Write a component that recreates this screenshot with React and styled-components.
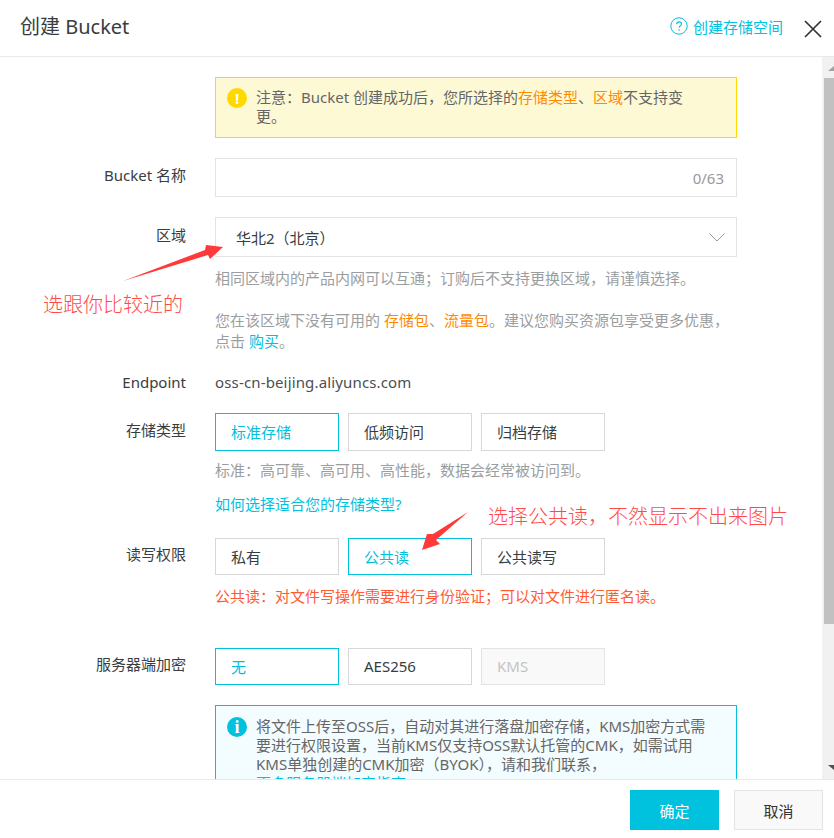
import React from 'react';
import styled, { createGlobalStyle } from 'styled-components';

const GlobalStyle = createGlobalStyle`
  html, body {
    margin: 0;
    padding: 0;
    background: #fff;
  }
  body {
    font-family: "Noto Sans", "Noto Sans CJK SC", sans-serif;
    font-size: 15px;
    color: #333;
    overflow: hidden;
  }
  * {
    box-sizing: border-box;
  }
`;

const App = () => {
  return (
    <Dialog>
      <GlobalStyle />
      <Header>
        <Title>创建 Bucket</Title>
        <HelpLink href="#">
          <svg width="18" height="18" viewBox="0 0 18 18" fill="none">
            <circle cx="9" cy="9" r="8.2" stroke="#00c1de" strokeWidth="1" />
            <path d="M6.6 7.1c.1-1.4 1.1-2.2 2.5-2.2 1.4 0 2.4.8 2.4 2 0 1.9-2.4 1.9-2.4 3.8" stroke="#00c1de" strokeWidth="1.1" />
            <circle cx="9.1" cy="13" r=".8" fill="#00c1de" />
          </svg>
          创建存储空间
        </HelpLink>
        <CloseButton>
          <svg width="18" height="18" viewBox="0 0 18 18">
            <path d="M1 1l16 16M17 1L1 17" stroke="#333" strokeWidth="1.7" />
          </svg>
        </CloseButton>
      </Header>

      <Body>
        <Form>
          <Row>
            <Label />
            <Control>
              <Notice>
                <RoundIcon $color="#ffd800">!</RoundIcon>
                <NoticeText>
                  注意：Bucket 创建成功后，您所选择的<Orange>存储类型</Orange>、<Orange>区域</Orange>不支持变更。
                </NoticeText>
              </Notice>
            </Control>
          </Row>

          <Row>
            <Label $top={7}>Bucket 名称</Label>
            <Control>
              <Field $height={39}>
                <span />
                <Counter>0/63</Counter>
              </Field>
            </Control>
          </Row>

          <Row $gap={12}>
            <Label $top={8}>区域</Label>
            <Control>
              <Field $height={40} $select>
                <SelectValue>华北2（北京）</SelectValue>
                <svg width="16" height="9" viewBox="0 0 16 9" fill="none">
                  <path d="M.5.5L8 8l7.5-7.5" stroke="#999" strokeWidth="1" />
                </svg>
              </Field>
              <Help $top={11}>相同区域内的产品内网可以互通；订购后不支持更换区域，请谨慎选择。</Help>
              <Help $top={21}>
                您在该区域下没有可用的 <Orange>存储包</Orange>、<Orange>流量包</Orange>。建议您购买资源包享受更多优惠，点击 <Link href="#">购买</Link>。
              </Help>
            </Control>
          </Row>

          <Row>
            <Label $top={8}>Endpoint</Label>
            <Control>
              <Plain>oss-cn-beijing.aliyuncs.com</Plain>
            </Control>
          </Row>

          <Row $gap={23}>
            <Label $top={7}>存储类型</Label>
            <Control>
              <Options $height={38}>
                <Option $active>标准存储</Option>
                <Option>低频访问</Option>
                <Option>归档存储</Option>
              </Options>
              <Help $top={9}>标准：高可靠、高可用、高性能，数据会经常被访问到。</Help>
              <Help $top={13}>
                <Link href="#">如何选择适合您的存储类型?</Link>
              </Help>
            </Control>
          </Row>

          <Row $gap={41}>
            <Label>读写权限</Label>
            <Control>
              <Options>
                <Option>私有</Option>
                <Option $active>公共读</Option>
                <Option>公共读写</Option>
              </Options>
              <Warning>公共读：对文件写操作需要进行身份验证；可以对文件进行匿名读。</Warning>
            </Control>
          </Row>

          <Row>
            <Label>服务器端加密</Label>
            <Control>
              <Options>
                <Option $active>无</Option>
                <Option>AES256</Option>
                <Option $disabled>KMS</Option>
              </Options>
            </Control>
          </Row>

          <Row>
            <Label />
            <Control>
              <InfoBox>
                <RoundIcon $color="#00c1de" $serif>i</RoundIcon>
                <InfoText>
                  将文件上传至OSS后，自动对其进行落盘加密存储，KMS加密方式需要进行权限设置，当前KMS仅支持OSS默认托管的CMK，如需试用KMS单独创建的CMK加密（BYOK），请和我们联系，
                  <br />
                  <Link href="#">更多服务器端加密指南</Link>
                </InfoText>
              </InfoBox>
            </Control>
          </Row>
        </Form>

        <Scrollbar>
          <ArrowUp />
          <Thumb />
          <ArrowDown />
        </Scrollbar>
      </Body>

      <Footer>
        <PrimaryButton>确定</PrimaryButton>
        <SecondaryButton>取消</SecondaryButton>
      </Footer>

      <Annotations width="834" height="838" viewBox="0 0 834 838">
        <polygon points="123,281 205,250 206,245 223,247 210,259 208,255" fill="#ff3a3a" />
        <polygon points="468,512 433,534 427,534 422,550 440,544 436,540" fill="#ff3a3a" />
      </Annotations>
      <Note $left={43} $top={291}>选跟你比较近的</Note>
      <Note $left={488} $top={503}>选择公共读，不然显示不出来图片</Note>
    </Dialog>
  );
};

const Dialog = styled.div`
  position: relative;
  display: flex;
  flex-direction: column;
  width: 834px;
  height: 838px;
  background: #fff;
  overflow: hidden;
`;
const Header = styled.div`
  display: flex;
  align-items: center;
  height: 57px;
  padding: 0 12px 4px 20px;
  border-bottom: 1px solid #e9e9e9;
`;
const Title = styled.div`
  flex: 1;
  margin-bottom: 2px;
  font-size: 20px;
  color: #373d41;
`;
const HelpLink = styled.a`
  display: flex;
  align-items: center;
  gap: 5px;
  color: #00c1de;
  text-decoration: none;
`;
const CloseButton = styled.span`
  display: flex;
  margin: 5px 0 0 21px;
`;
const Body = styled.div`
  position: relative;
  flex: 1;
  min-height: 0;
  overflow: hidden;
`;
const Form = styled.div`
  display: flex;
  flex-direction: column;
  padding: 20px 97px 0 0;
`;
const Row = styled.div`
  display: flex;
  margin-bottom: ${(props) => props.$gap || 20}px;
`;
const Label = styled.div`
  flex: 0 0 186px;
  padding-top: ${(props) => props.$top || 6}px;
  text-align: right;
  line-height: 21px;
  color: #373d41;
`;
const Control = styled.div`
  flex: 1;
  margin-left: 29px;
  min-width: 0;
`;
const Notice = styled.div`
  display: flex;
  gap: 9px;
  height: 61px;
  padding: 10px 42px 0 11px;
  background: #fef9d5;
  border: 1px solid #ffd800;
`;
const RoundIcon = styled.span`
  flex: 0 0 20px;
  width: 20px;
  height: 20px;
  border-radius: 50%;
  background: ${(props) => props.$color};
  color: #fff;
  font-family: ${(props) => (props.$serif ? '"Liberation Serif", serif' : 'inherit')};
  font-size: ${(props) => (props.$serif ? '18px' : '15px')};
  font-weight: 700;
  line-height: 20px;
  text-align: center;
`;
const NoticeText = styled.div`
  line-height: 19px;
  color: #666;
`;
const Orange = styled.span`
  color: #ff8a00;
`;
const Field = styled.div`
  display: flex;
  align-items: center;
  justify-content: space-between;
  height: ${(props) => props.$height}px;
  padding: 0 ${(props) => (props.$select ? '11px' : '12px')} 0 20px;
  border: 1px solid #e3e3e3;
`;
const Counter = styled.span`
  color: #999;
`;
const SelectValue = styled.span`
  color: #373d41;
`;
const Help = styled.div`
  margin-top: ${(props) => props.$top}px;
  line-height: 21px;
  color: #9b9ea0;
`;
const Link = styled.a`
  color: #00c1de;
  text-decoration: none;
`;
const Plain = styled.div`
  padding-top: 8px;
  line-height: 21px;
  letter-spacing: 0.15px;
  color: #4a4f52;
`;
const Options = styled.div`
  display: flex;
  gap: 9px;
  height: ${(props) => props.$height || 37}px;
`;
const Option = styled.div`
  display: flex;
  align-items: center;
  width: 124px;
  padding: 0 15px 1px;
  background: ${(props) => (props.$disabled ? '#f9f9f9' : '#fff')};
  border: 1px solid ${(props) => (props.$active ? '#00c1de' : props.$disabled ? '#e3e3e3' : '#d7d7d7')};
  color: ${(props) => (props.$active ? '#00c1de' : props.$disabled ? '#c4c4c4' : '#373d41')};
`;
const Warning = styled.div`
  margin-top: 11px;
  line-height: 21px;
  color: #ff5a36;
`;
const InfoBox = styled.div`
  display: flex;
  gap: 9px;
  min-height: 100px;
  padding: 11px 28px 0 11px;
  background: #f3fcff;
  border: 1px solid #00c1de;
`;
const InfoText = styled.div`
  line-height: 19px;
  color: #666;
`;
const Scrollbar = styled.div`
  position: absolute;
  top: 0;
  right: 0;
  bottom: 0;
  display: flex;
  flex-direction: column;
  align-items: flex-end;
  width: 12px;
  background: #f1f1f1;
`;
const Thumb = styled.div`
  width: 10px;
  height: 546px;
  background: #c1c1c1;
`;
const ArrowUp = styled.div`
  width: 0;
  height: 0;
  margin: 9px 0 7px;
  border-left: 6px solid transparent;
  border-bottom: 5px solid #a3a3a3;
`;
const ArrowDown = styled.div`
  width: 0;
  height: 0;
  margin-top: auto;
  margin-bottom: 9px;
  border-left: 6px solid transparent;
  border-top: 5px solid #505050;
`;
const Footer = styled.div`
  display: flex;
  justify-content: flex-end;
  gap: 15px;
  height: 59px;
  padding: 10px 11px 0 0;
  border-top: 1px solid #e9e9e9;
  background: #fff;
`;
const PrimaryButton = styled.button`
  width: 89px;
  height: 40px;
  border: 0;
  background: #00c1de;
  color: #fff;
  font: inherit;
`;
const SecondaryButton = styled.button`
  width: 89px;
  height: 40px;
  border: 1px solid #e3e3e3;
  background: #f9f9f9;
  color: #333;
  font: inherit;
`;
const Annotations = styled.svg`
  position: absolute;
  top: 0;
  left: 0;
  pointer-events: none;
`;
const Note = styled.div`
  position: absolute;
  top: ${(props) => props.$top}px;
  left: ${(props) => props.$left}px;
  font-size: 20px;
  font-weight: 300;
  line-height: 28px;
  color: #ff4a4a;
  white-space: nowrap;
`;

export default App;
